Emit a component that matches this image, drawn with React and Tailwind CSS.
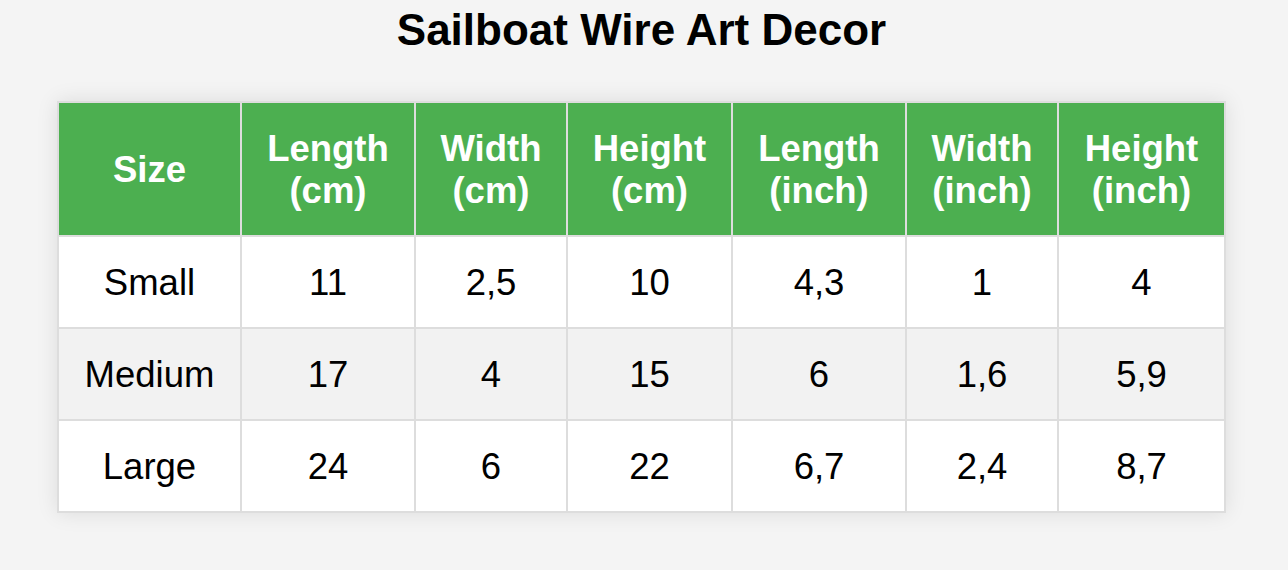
export default function App() {
  const headers = [
    ["Size"],
    ["Length", "(cm)"],
    ["Width", "(cm)"],
    ["Height", "(cm)"],
    ["Length", "(inch)"],
    ["Width", "(inch)"],
    ["Height", "(inch)"],
  ];
  const rows = [
    ["Small", "11", "2,5", "10", "4,3", "1", "4"],
    ["Medium", "17", "4", "15", "6", "1,6", "5,9"],
    ["Large", "24", "6", "22", "6,7", "2,4", "8,7"],
  ];
  const widths = ["w-[183px]", "w-[174px]", "w-[152px]", "w-[165px]", "w-[174px]", "w-[152px]", "w-[167px]"];
  return (
    <div className="min-h-[570px] bg-[#f4f4f4] font-['Liberation_Sans',Arial,sans-serif]">
      <div className="w-[1283px] pt-[5px]">
        <h1 className="text-center text-[44px] font-bold leading-[50px] text-black mb-[46px]">
          Sailboat Wire Art Decor
        </h1>
        <div className="flex justify-center">
          <table className="w-[1167px] table-fixed border-collapse bg-white shadow-[0_0_20px_rgba(0,0,0,0.1)]">
            <colgroup>
              {widths.map((w, i) => (
                <col key={i} className={w} />
              ))}
            </colgroup>
            <thead>
              <tr>
                {headers.map((h, i) => (
                  <th
                    key={i}
                    className="bg-[#4caf50] text-white font-bold text-[36.5px] leading-[42px] pt-[25px] pb-[23px] px-[12px] border-2 border-[#dddddd] text-center align-middle"
                  >
                    {h.map((line, j) => (
                      <span key={j} className="block">
                        {line}
                      </span>
                    ))}
                  </th>
                ))}
              </tr>
            </thead>
            <tbody>
              {rows.map((r, i) => (
                <tr key={i} className={i === 1 ? "bg-[#f2f2f2]" : "bg-white"}>
                  {r.map((c, j) => (
                    <td
                      key={j}
                      className="text-black text-[36.5px] leading-[42px] pt-[25px] pb-[23px] px-[12px] border-2 border-[#dddddd] text-center align-middle"
                    >
                      {c}
                    </td>
                  ))}
                </tr>
              ))}
            </tbody>
          </table>
        </div>
      </div>
    </div>
  );
}
